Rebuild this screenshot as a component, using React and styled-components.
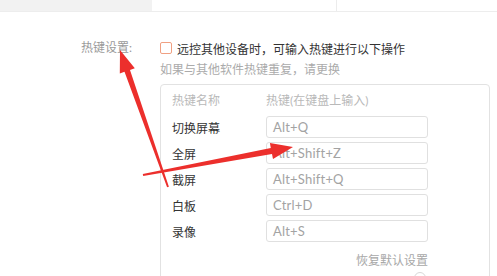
import React from "react";
import styled, { createGlobalStyle } from "styled-components";

const GlobalStyle = createGlobalStyle`
  html, body {
    margin: 0;
    padding: 0;
    background: #ffffff;
    overflow: hidden;
  }
  body {
    font-family: Lato, "Noto Sans CJK SC", sans-serif;
  }
`;

const Page = styled.div`
  position: relative;
  width: 497px;
  height: 276px;
  overflow: hidden;
`;

const TopBar = styled.div`
  display: flex;
  height: 11px;
  border-bottom: 1px solid #ededed;
`;

const Tab = styled.div`
  width: ${(p) => p.$w}px;
  background: ${(p) => (p.$active ? "#f2f2f2" : "#ffffff")};
  border-right: ${(p) => (p.$divider ? "1px solid #ececec" : "none")};
`;

const Section = styled.div`
  display: flex;
  margin-top: 28px;
  padding-left: 81px;
`;

const FieldLabel = styled.div`
  width: 79px;
  font-size: 12px;
  line-height: 16px;
  color: #9a9a9a;
`;

const Field = styled.div`
  display: flex;
  flex-direction: column;
`;

const CheckRow = styled.label`
  display: flex;
  align-items: center;
  gap: 5px;
  height: 16px;
  font-size: 12px;
  color: #333333;
`;

const CheckBox = styled.span`
  box-sizing: border-box;
  width: 12px;
  height: 12px;
  border: 1px solid #f0a082;
  border-radius: 2px;
`;

const Hint = styled.div`
  margin-top: 6px;
  font-size: 12px;
  line-height: 16px;
  color: #ababab;
`;

const Panel = styled.div`
  box-sizing: border-box;
  margin-top: 6px;
  width: 330px;
  height: 260px;
  border: 1px solid #e2e2e2;
  border-radius: 4px;
  padding: 8px 0 0 11px;
`;

const HeaderRow = styled.div`
  display: grid;
  grid-template-columns: 94px 162px;
  font-size: 12px;
  line-height: 16px;
  color: #b9b9b9;
  margin-bottom: 7px;
`;

const KeyList = styled.div`
  display: flex;
  flex-direction: column;
  gap: 4px;
`;

const KeyRow = styled.div`
  display: grid;
  grid-template-columns: 94px 162px;
  align-items: center;
`;

const KeyName = styled.div`
  font-size: 12px;
  color: #333333;
`;

const KeyInput = styled.div`
  box-sizing: border-box;
  height: 22px;
  border: 1px solid #e0e0e0;
  border-radius: 3px;
  padding-left: 6px;
  display: flex;
  align-items: center;
  font-family: Lato, sans-serif;
  font-size: 13px;
  letter-spacing: 0.2px;
  color: #a3a3a3;
`;

const Footer = styled.div`
  width: 256px;
  display: flex;
  flex-direction: column;
  align-items: flex-end;
  margin-top: 11px;
`;

const ResetLink = styled.span`
  font-size: 12px;
  line-height: 16px;
  color: #a8a8a8;
`;

const HelpDot = styled.span`
  box-sizing: border-box;
  margin-top: 3px;
  margin-right: 2px;
  width: 12px;
  height: 12px;
  border: 1px solid #d8d8d8;
  border-radius: 50%;
`;

const Overlay = styled.svg`
  position: absolute;
  left: 0;
  top: 0;
  pointer-events: none;
`;

const keys = [
  ["切换屏幕", "Alt+Q"],
  ["全屏", "Alt+Shift+Z"],
  ["截屏", "Alt+Shift+Q"],
  ["白板", "Ctrl+D"],
  ["录像", "Alt+S"],
];

export default function App() {
  return (
    <Page>
      <GlobalStyle />
      <TopBar>
        <Tab $w={152} $active />
        <Tab $w={184} $divider />
      </TopBar>
      <Section>
        <FieldLabel>热键设置:</FieldLabel>
        <Field>
          <CheckRow>
            <CheckBox />
            远控其他设备时，可输入热键进行以下操作
          </CheckRow>
          <Hint>如果与其他软件热键重复，请更换</Hint>
          <Panel>
            <HeaderRow>
              <span>热键名称</span>
              <span>热键(在键盘上输入)</span>
            </HeaderRow>
            <KeyList>
              {keys.map(([name, combo]) => (
                <KeyRow key={name}>
                  <KeyName>{name}</KeyName>
                  <KeyInput>{combo}</KeyInput>
                </KeyRow>
              ))}
            </KeyList>
            <Footer>
              <ResetLink>恢复默认设置</ResetLink>
              <HelpDot />
            </Footer>
          </Panel>
        </Field>
      </Section>
      <Overlay width="497" height="276" viewBox="0 0 497 276">
        <polygon
          fill="#ec2f2c"
          points="168.9,186.7 130.0,69.9 134.8,68.2 120,50 119.8,73.4 124.5,71.7 167.1,187.3"
        />
        <polygon
          fill="#ec2f2c"
          points="143.2,175.9 272.0,154.0 273.0,158.9 293,147 269.9,143.1 270.8,148.1 142.8,174.1"
        />
      </Overlay>
    </Page>
  );
}
